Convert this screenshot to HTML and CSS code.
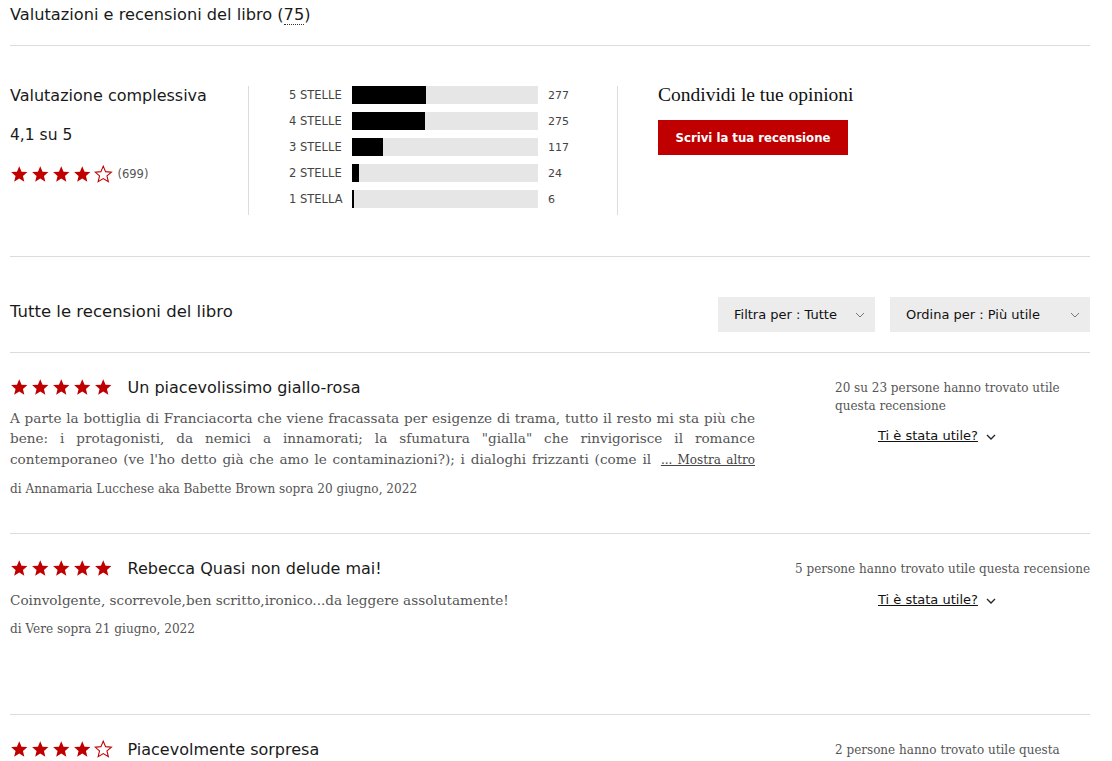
FILE: index.html
```html
<!DOCTYPE html>
<html lang="it">
<head>
<meta charset="utf-8">
<title>Valutazioni e recensioni</title>
<link rel="stylesheet" href="styles.css">
</head>
<body>
<svg width="0" height="0" class="defs">
  <defs>
    <path id="star" d="M12 1.5l3 7.1 7.6.6-5.8 5 1.8 7.4L12 17.6l-6.6 4 1.8-7.4-5.8-5 7.6-.6z"/>
  </defs>
</svg>
<div class="page">
  <h2 class="page-title">Valutazioni e recensioni del libro (<span class="dotted">75</span>)</h2>

  <section class="summary">
    <div class="overall">
      <div class="overall-label">Valutazione complessiva</div>
      <div class="overall-score">4,1 su 5</div>
      <div class="overall-stars">
        <span class="stars">
          <svg viewBox="0 0 24 24" class="st full"><use href="#star"/></svg>
          <svg viewBox="0 0 24 24" class="st full"><use href="#star"/></svg>
          <svg viewBox="0 0 24 24" class="st full"><use href="#star"/></svg>
          <svg viewBox="0 0 24 24" class="st full"><use href="#star"/></svg>
          <svg viewBox="0 0 24 24" class="st empty"><use href="#star"/></svg>
        </span>
        <span class="count">(699)</span>
      </div>
    </div>
    <div class="bars">
      <div class="bar-row"><span class="bar-label">5 STELLE</span><span class="track"><span class="fill" style="width:74px"></span></span><span class="bar-count">277</span></div>
      <div class="bar-row"><span class="bar-label">4 STELLE</span><span class="track"><span class="fill" style="width:73px"></span></span><span class="bar-count">275</span></div>
      <div class="bar-row"><span class="bar-label">3 STELLE</span><span class="track"><span class="fill" style="width:31px"></span></span><span class="bar-count">117</span></div>
      <div class="bar-row"><span class="bar-label">2 STELLE</span><span class="track"><span class="fill" style="width:7px"></span></span><span class="bar-count">24</span></div>
      <div class="bar-row"><span class="bar-label">1 STELLA</span><span class="track"><span class="fill" style="width:2px"></span></span><span class="bar-count">6</span></div>
    </div>
    <div class="share">
      <div class="share-title">Condividi le tue opinioni</div>
      <button class="write-btn">Scrivi la tua recensione</button>
    </div>
  </section>

  <section class="list-head">
    <h3 class="list-title">Tutte le recensioni del libro</h3>
    <div class="selects">
      <div class="select sel-filter">Filtra per : Tutte <svg class="chev" viewBox="0 0 10 6"><path d="M1 1l4 4 4-4"/></svg></div>
      <div class="select sel-order">Ordina per : Più utile <svg class="chev" viewBox="0 0 10 6"><path d="M1 1l4 4 4-4"/></svg></div>
    </div>
  </section>

  <article class="review">
    <div class="review-main">
      <div class="review-head">
        <span class="stars">
          <svg viewBox="0 0 24 24" class="st full"><use href="#star"/></svg>
          <svg viewBox="0 0 24 24" class="st full"><use href="#star"/></svg>
          <svg viewBox="0 0 24 24" class="st full"><use href="#star"/></svg>
          <svg viewBox="0 0 24 24" class="st full"><use href="#star"/></svg>
          <svg viewBox="0 0 24 24" class="st full"><use href="#star"/></svg>
        </span>
        <span class="review-title">Un piacevolissimo giallo-rosa</span>
      </div>
      <p class="review-body clamped">A parte la bottiglia di Franciacorta che viene fracassata per esigenze di trama, tutto il resto mi sta più che bene: i protagonisti, da nemici a innamorati; la sfumatura "gialla" che rinvigorisce il romance contemporaneo (ve l'ho detto già che amo le contaminazioni?); i dialoghi frizzanti (come il <a class="more" href="#">... Mostra altro</a></p>
      <p class="review-author">di Annamaria Lucchese aka Babette Brown sopra 20 giugno, 2022</p>
    </div>
    <div class="review-side">
      <p class="helpful">20 su 23 persone hanno trovato utile questa recensione</p>
      <a class="useful" href="#">Ti è stata utile?</a><svg class="chev dark" viewBox="0 0 10 6"><path d="M1 1l4 4 4-4"/></svg>
    </div>
  </article>

  <article class="review">
    <div class="review-main">
      <div class="review-head">
        <span class="stars">
          <svg viewBox="0 0 24 24" class="st full"><use href="#star"/></svg>
          <svg viewBox="0 0 24 24" class="st full"><use href="#star"/></svg>
          <svg viewBox="0 0 24 24" class="st full"><use href="#star"/></svg>
          <svg viewBox="0 0 24 24" class="st full"><use href="#star"/></svg>
          <svg viewBox="0 0 24 24" class="st full"><use href="#star"/></svg>
        </span>
        <span class="review-title">Rebecca Quasi non delude mai!</span>
      </div>
      <p class="review-body">Coinvolgente, scorrevole,ben scritto,ironico...da leggere assolutamente!</p>
      <p class="review-author">di Vere sopra 21 giugno, 2022</p>
    </div>
    <div class="review-side">
      <div class="helpful-wrap"><p class="helpful nowrap">5 persone hanno trovato utile questa recensione</p></div>
      <a class="useful second" href="#">Ti è stata utile?</a><svg class="chev dark" viewBox="0 0 10 6"><path d="M1 1l4 4 4-4"/></svg>
    </div>
  </article>

  <article class="review">
    <div class="review-main">
      <div class="review-head">
        <span class="stars">
          <svg viewBox="0 0 24 24" class="st full"><use href="#star"/></svg>
          <svg viewBox="0 0 24 24" class="st full"><use href="#star"/></svg>
          <svg viewBox="0 0 24 24" class="st full"><use href="#star"/></svg>
          <svg viewBox="0 0 24 24" class="st full"><use href="#star"/></svg>
          <svg viewBox="0 0 24 24" class="st empty"><use href="#star"/></svg>
        </span>
        <span class="review-title">Piacevolmente sorpresa</span>
      </div>
    </div>
    <div class="review-side">
      <p class="helpful">2 persone hanno trovato utile questa recensione</p>
    </div>
  </article>
</div>
</body>
</html>
```

FILE: styles.css
```css
* { box-sizing: border-box; }
html, body { margin: 0; padding: 0; background: #fff; }
body {
  font-family: "DejaVu Sans", sans-serif;
  color: #1a1a1a;
  overflow: hidden;
}
.defs { position: absolute; }
.page {
  width: 1080px;
  margin-left: 10px;
}
.page-title {
  margin: 0;
  padding: 5px 0 20px;
  font-size: 16.2px;
  line-height: 20px;
  font-weight: normal;
  border-bottom: 1px solid #dcdcdc;
}
.dotted { border-bottom: 1px dotted #333; }

.summary {
  display: flex;
  padding: 40px 0 41px;
  border-bottom: 1px solid #dcdcdc;
}
.overall {
  width: 239px;
  border-right: 1px solid #dcdcdc;
  height: 129px;
}
.overall-label { font-size: 16px; line-height: 20px; }
.overall-score { font-size: 15.5px; line-height: 20px; margin-top: 19px; }
.overall-stars { display: flex; align-items: center; margin-top: 20px; }
.count { font-size: 11.5px; color: #555; margin-left: 5px; }

.stars { display: inline-flex; gap: 2.5px; }
.st { width: 18.5px; height: 18.5px; display: block; }
.st.full { fill: #c00000; }
.st.empty { fill: none; stroke: #c00000; stroke-width: 1.4; }

.bars {
  width: 369px;
  border-right: 1px solid #dcdcdc;
  padding-left: 40px;
  height: 129px;
  display: flex;
  flex-direction: column;
  gap: 8px;
}
.bar-row { display: flex; align-items: center; height: 18px; }
.bar-label {
  width: 53px;
  font-size: 11.5px;
  color: #444;
  margin-right: 10px;
  white-space: nowrap;
}
.track { width: 186px; height: 18px; background: #e6e6e6; display: block; }
.fill { display: block; height: 100%; background: #000; }
.bar-count { font-size: 11px; color: #444; margin-left: 10px; }

.share { padding-left: 40px; }
.share-title {
  font-family: "Liberation Serif", serif;
  font-size: 19.5px;
  line-height: 20px;
  color: #111;
  margin-top: -1px;
}
.write-btn {
  margin-top: 15px;
  width: 190px;
  height: 35px;
  background: #c00000;
  color: #fff;
  border: 0;
  font-family: "DejaVu Sans Condensed", "DejaVu Sans", sans-serif;
  font-weight: bold;
  font-size: 13px;
  display: block;
}

.list-head {
  display: flex;
  justify-content: space-between;
  align-items: center;
  padding: 40px 0 20px;
  border-bottom: 1px solid #dcdcdc;
}
.list-title { margin: -5px 0 0; font-size: 16.5px; font-weight: normal; line-height: 20px; }
.selects { display: flex; gap: 15px; }
.select {
  height: 35px;
  background: #ececec;
  font-size: 13px;
  color: #111;
  display: flex;
  align-items: center;
  justify-content: space-between;
  padding: 0 10px 0 16px;
}
.sel-filter { width: 157px; }
.sel-order { width: 200px; }
.chev { width: 10px; height: 6px; fill: none; stroke: #777; stroke-width: 1; }
.chev.dark { stroke: #222; stroke-width: 1.3; margin-left: 8px; }

.review {
  display: grid;
  grid-template-columns: 745px 255px;
  column-gap: 80px;
  height: 181px;
  border-bottom: 1px solid #dcdcdc;
  padding-top: 24px;
}
.review-head { display: flex; align-items: center; height: 20px; }
.review-title { font-size: 16px; margin-left: 15px; }
.review-body {
  margin: 12px 0 0;
  font-family: "DejaVu Serif", serif;
  font-size: 13.6px;
  line-height: 20.3px;
  color: #555;
  text-align: justify;
}
.review-body.clamped { text-align-last: justify; margin-top: 11px; }
.more { font-size: 12px; color: #444; margin-left: 4px; }
.review-author {
  margin: 9px 0 0;
  font-family: "DejaVu Serif", serif;
  font-size: 12.1px;
  line-height: 20px;
  color: #555;
}
.review-side { font-size: 13px; padding-top: 2px; }
.helpful {
  margin: 0;
  font-family: "DejaVu Serif", serif;
  font-size: 12px;
  line-height: 18px;
  color: #555;
}
.helpful-wrap { display: flex; justify-content: flex-end; }
.helpful.nowrap { white-space: nowrap; }
.useful {
  display: inline-block;
  margin: 13px 0 0 43px;
  color: #111;
  font-size: 13px;
  text-decoration: underline;
}
.useful.second { margin-top: 14px; }
.review:last-child { height: auto; border-bottom: 0; }
```
